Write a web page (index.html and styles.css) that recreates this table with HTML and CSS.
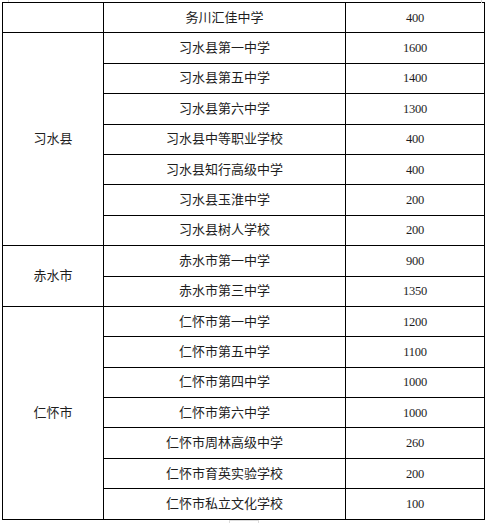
FILE: index.html
```html
<!DOCTYPE html>
<html lang="zh">
<head>
<meta charset="utf-8">
<link rel="stylesheet" href="styles.css">
</head>
<body>
<div class="page">
  <span class="mark mark-tl"></span>
  <span class="mark mark-tr"></span>
  <table class="grid">
    <colgroup>
      <col class="c1"><col class="c2"><col class="c3">
    </colgroup>
    <tbody>
      <tr><td></td><td>务川汇佳中学</td><td class="num">400</td></tr>
      <tr><td rowspan="7">习水县</td><td>习水县第一中学</td><td class="num">1600</td></tr>
      <tr><td>习水县第五中学</td><td class="num">1400</td></tr>
      <tr><td>习水县第六中学</td><td class="num">1300</td></tr>
      <tr><td>习水县中等职业学校</td><td class="num">400</td></tr>
      <tr><td>习水县知行高级中学</td><td class="num">400</td></tr>
      <tr><td>习水县玉淮中学</td><td class="num">200</td></tr>
      <tr><td>习水县树人学校</td><td class="num">200</td></tr>
      <tr><td rowspan="2">赤水市</td><td>赤水市第一中学</td><td class="num">900</td></tr>
      <tr><td>赤水市第三中学</td><td class="num">1350</td></tr>
      <tr><td rowspan="7">仁怀市</td><td>仁怀市第一中学</td><td class="num">1200</td></tr>
      <tr><td>仁怀市第五中学</td><td class="num">1100</td></tr>
      <tr><td>仁怀市第四中学</td><td class="num">1000</td></tr>
      <tr><td>仁怀市第六中学</td><td class="num">1000</td></tr>
      <tr><td>仁怀市周林高级中学</td><td class="num">260</td></tr>
      <tr><td>仁怀市育英实验学校</td><td class="num">200</td></tr>
      <tr><td>仁怀市私立文化学校</td><td class="num">100</td></tr>
    </tbody>
  </table>
  <span class="mark mark-bottom"></span>
</div>
</body>
</html>
```

FILE: styles.css
```css
html, body {
  margin: 0;
  padding: 0;
  background: #ffffff;
}

.page {
  position: relative;
  width: 486px;
  height: 523px;
  overflow: hidden;
  padding: 2px 0 0 2px;
  box-sizing: border-box;
}

.grid {
  border-collapse: collapse;
  table-layout: fixed;
  width: 482px;
  font-family: "Liberation Serif", "Noto Sans CJK SC", serif;
  font-size: 13px;
  color: #1e1e1e;
}

.c1 { width: 101px; }
.c2 { width: 242px; }
.c3 { width: 139px; }

.grid td {
  border: 1px solid #000;
  height: 29.4px;
  padding: 0;
  text-align: center;
  vertical-align: middle;
  line-height: 16px;
}

.grid td.num {
  font-size: 12.5px;
  letter-spacing: -0.3px;
}

.mark {
  position: absolute;
  display: block;
  border-color: #d0d0d0;
  border-style: solid;
  border-width: 0;
}

.mark-tl {
  left: 8px;
  top: 0;
  height: 2px;
  border-left-width: 1px;
}

.mark-tr {
  left: 481px;
  top: 0;
  height: 3px;
  border-left-width: 1px;
}

.mark-bottom {
  left: 229px;
  top: 520px;
  width: 28px;
  height: 3px;
  border-left-width: 1px;
  border-right-width: 1px;
  border-top-width: 1px;
  border-color: #dcdcdc;
}
```
